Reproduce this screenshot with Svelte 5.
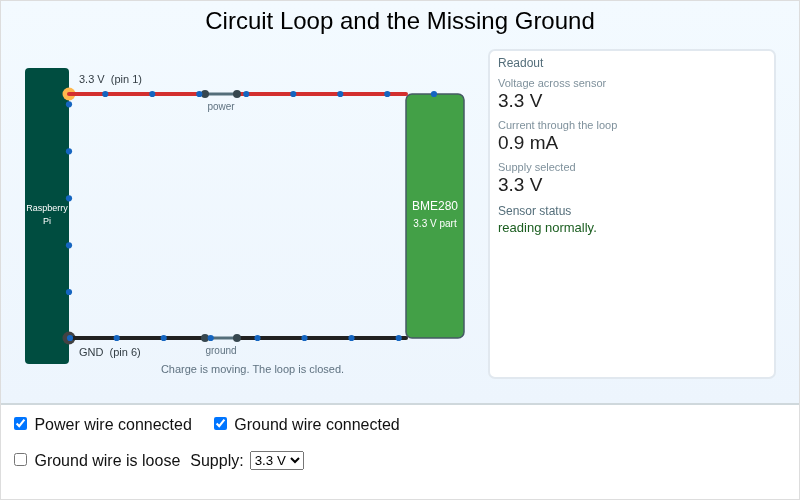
<script>
  const topDots = [[69,104.3],[69,151.3],[69,198.3],[69,245.3],[69,292],[105.3,94],[152.3,94],[199.3,94],[246.3,94],[293.3,94],[340.3,94],[387.3,94],[434,94]];
  const botDots = [[70,338],[116.7,338],[163.7,338],[210.7,338],[257.5,338],[304.5,338],[351.5,338],[398.7,338]];
  const dots = [...topDots, ...botDots];

  const readings = [
    { label: 'Voltage across sensor', value: '3.3 V' },
    { label: 'Current through the loop', value: '0.9 mA' },
    { label: 'Supply selected', value: '3.3 V' }
  ];

  let power = $state(true);
  let ground = $state(true);
  let loose = $state(false);
  let supply = $state('3.3 V');
</script>

<div class="root">
  <section class="stage">
    <h1>Circuit Loop and the Missing Ground</h1>
    <div class="main">
      <svg class="diagram" viewBox="1 40 487 340" width="487" height="340" aria-label="Circuit diagram">
        <rect x="25" y="68" width="44" height="296" rx="4" fill="#004d40" />
        <text x="47" y="211" class="pi">Raspberry</text>
        <text x="47" y="224" class="pi">Pi</text>

        <rect x="406" y="94" width="58" height="244" rx="6" fill="#43a047" stroke="#455a64" stroke-width="1.5" />
        <text x="435" y="210" class="bme">BME280</text>
        <text x="435" y="227" class="part">3.3 V part</text>

        <circle cx="69" cy="94" r="6.5" fill="#ffb74d" />
        <circle cx="69" cy="338" r="6.5" fill="#424242" />

        <line x1="69" y1="94" x2="205" y2="94" class="wire red" />
        <line x1="237" y1="94" x2="406" y2="94" class="wire red" />
        <line x1="69" y1="338" x2="205" y2="338" class="wire black" />
        <line x1="237" y1="338" x2="406" y2="338" class="wire black" />

        <line x1="205" y1="94" x2="237" y2="94" class="bridge" />
        <line x1="205" y1="338" x2="237" y2="338" class="bridge" />
        <circle cx="205" cy="94" r="4" class="node" />
        <circle cx="237" cy="94" r="4" class="node" />
        <circle cx="205" cy="338" r="4" class="node" />
        <circle cx="237" cy="338" r="4" class="node" />

        {#each dots as [x, y]}
          <circle cx={x} cy={y} r="3.1" fill="#1565c0" />
        {/each}

        <text x="79" y="83" class="pin">3.3 V  (pin 1)</text>
        <text x="79" y="356" class="pin">GND  (pin 6)</text>
        <text x="221" y="110" class="tag">power</text>
        <text x="221" y="354" class="tag">ground</text>
        <text x="252.5" y="373" class="status">Charge is moving. The loop is closed.</text>
      </svg>

      <aside class="panel">
        <div class="heading">Readout</div>
        {#each readings as r}
          <div class="reading">
            <div class="label">{r.label}</div>
            <div class="value">{r.value}</div>
          </div>
        {/each}
        <div class="sensor-label">Sensor status</div>
        <div class="sensor-state">reading normally.</div>
      </aside>
    </div>
  </section>

  <section class="controls">
    <div class="row">
      <label><input type="checkbox" bind:checked={power} /> Power wire connected</label>
      <label><input type="checkbox" bind:checked={ground} /> Ground wire connected</label>
    </div>
    <div class="row second">
      <label><input type="checkbox" bind:checked={loose} /> Ground wire is loose</label>
      <label class="supply">Supply:
        <select bind:value={supply}>
          <option>3.3 V</option>
          <option>5 V</option>
        </select>
      </label>
    </div>
  </section>
</div>

<style>
  :global(body) {
    margin: 0;
    font-family: "Liberation Sans", Arial, sans-serif;
    background: #fff;
  }
  .root {
    height: 500px;
    box-sizing: border-box;
    border: 1px solid #dddddd;
    display: flex;
    flex-direction: column;
    will-change: transform;
  }
  .stage {
    height: 404px;
    box-sizing: border-box;
    flex: none;
    background: linear-gradient(#f3faff, #edf5fd);
    border-bottom: 2px solid #cfd8dc;
    display: flex;
    flex-direction: column;
  }
  h1 {
    margin: 0;
    height: 39px;
    padding-top: 5px;
    box-sizing: border-box;
    font-size: 24px;
    line-height: 30px;
    font-weight: 400;
    text-align: center;
    color: #000;
  }
  .main {
    display: flex;
    align-items: flex-start;
  }
  .diagram {
    display: block;
    flex: none;
  }
  .pi { font-size: 9px; fill: #fff; text-anchor: middle; }
  .bme { font-size: 12px; fill: #fff; text-anchor: middle; }
  .part { font-size: 10px; fill: #fff; text-anchor: middle; }
  .pin { font-size: 11px; fill: #333d44; white-space: pre; }
  .tag { font-size: 10px; fill: #5f7280; text-anchor: middle; }
  .status { font-size: 11px; fill: #5f7280; text-anchor: middle; }
  .wire { stroke-width: 4; stroke-linecap: round; }
  .red { stroke: #d32f2f; }
  .black { stroke: #212121; }
  .bridge { stroke: #546e7a; stroke-width: 3; }
  .node { fill: #37474f; }
  .panel {
    width: 288px;
    height: 330px;
    margin-top: 9px;
    box-sizing: border-box;
    background: #fff;
    border: 2px solid #e1e8ef;
    border-radius: 7px;
    padding: 4px 8px;
    font-size: 12px;
    color: #546e7a;
  }
  .heading { line-height: 16px; margin-bottom: 5px; }
  .reading { margin-bottom: 6px; }
  .label { font-size: 11px; line-height: 14px; color: #7f919c; }
  .value { font-size: 19px; line-height: 23px; margin-top: -1px; color: #212121; }
  .sensor-label { line-height: 16px; margin-top: 7px; }
  .sensor-state { font-size: 13px; line-height: 17px; color: #1b5e20; }
  .controls {
    flex: 1;
    padding: 10px 13px;
    font-size: 16px;
    color: #111;
  }
  .row {
    display: flex;
    gap: 22px;
    align-items: center;
    height: 20px;
  }
  .row.second {
    margin-top: 16px;
    gap: 10px;
  }
  .supply {
    display: flex;
    align-items: center;
    gap: 6px;
  }
  input[type="checkbox"] {
    width: 13px;
    height: 13px;
    margin: 0 3px 0 0;
    vertical-align: 0;
  }
  select {
    font-family: "Liberation Sans", Arial, sans-serif;
    font-size: 13.33px;
    margin: 0 0 1px;
  }
</style>
